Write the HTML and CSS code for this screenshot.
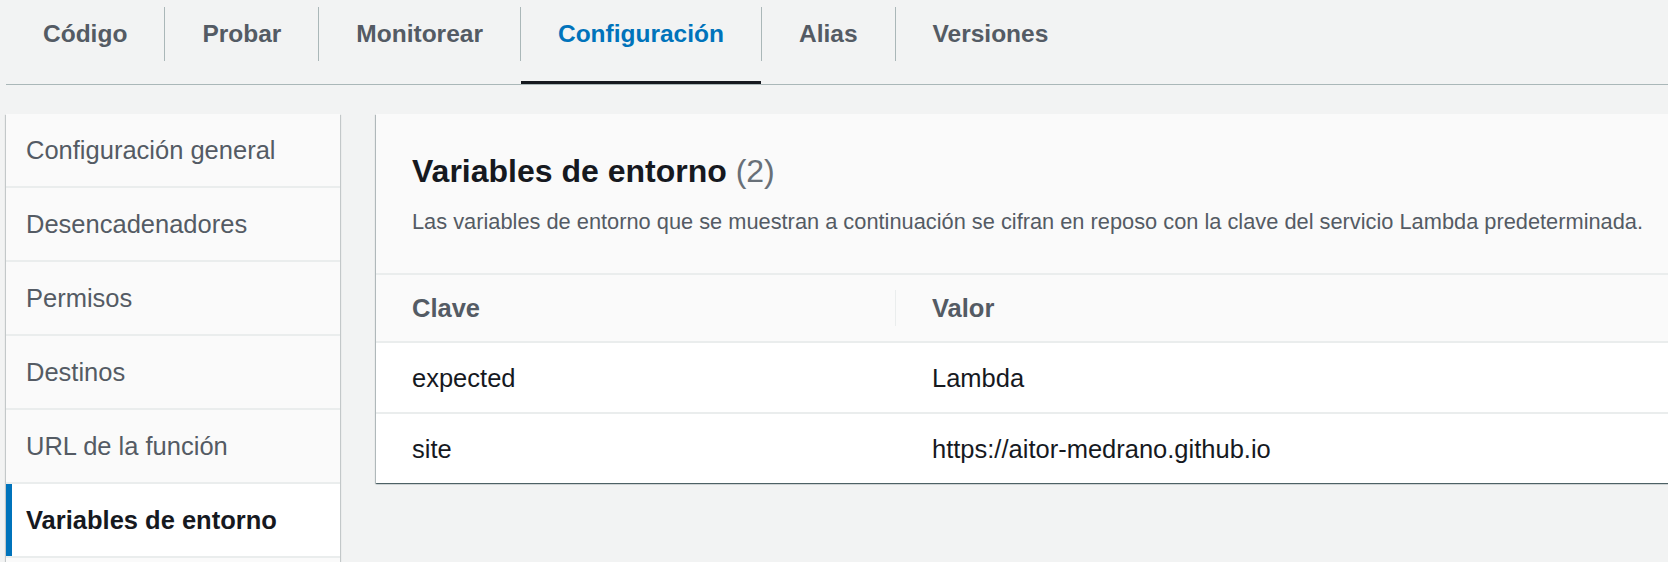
FILE: index.html
```html
<!DOCTYPE html>
<html lang="es">
<head>
<meta charset="utf-8">
<title>Configuración - Variables de entorno</title>
<link rel="stylesheet" href="styles.css">
</head>
<body>
<div class="page">
  <nav class="tabs">
    <div class="tab">Código</div>
    <span class="tab-sep"></span>
    <div class="tab">Probar</div>
    <span class="tab-sep"></span>
    <div class="tab">Monitorear</div>
    <span class="tab-sep"></span>
    <div class="tab tab-active">Configuración</div>
    <span class="tab-sep"></span>
    <div class="tab">Alias</div>
    <span class="tab-sep"></span>
    <div class="tab">Versiones</div>
  </nav>

  <div class="content">
    <aside class="side-nav">
      <div class="side-item">Configuración general</div>
      <div class="side-item">Desencadenadores</div>
      <div class="side-item">Permisos</div>
      <div class="side-item">Destinos</div>
      <div class="side-item">URL de la función</div>
      <div class="side-item side-item-active">Variables de entorno</div>
      <div class="side-item"></div>
    </aside>

    <section class="card">
      <header class="card-header">
        <h2 class="card-title">Variables de entorno <span class="card-count">(2)</span></h2>
        <p class="card-desc">Las variables de entorno que se muestran a continuación se cifran en reposo con la clave del servicio Lambda predeterminada.</p>
      </header>
      <div class="table">
        <div class="row row-head">
          <div class="cell">Clave</div>
          <span class="col-sep"></span>
          <div class="cell cell-value">Valor</div>
        </div>
        <div class="row row-body">
          <div class="cell">expected</div>
          <div class="cell cell-value">Lambda</div>
        </div>
        <div class="row row-body">
          <div class="cell">site</div>
          <div class="cell cell-value">https://aitor-medrano.github.io</div>
        </div>
      </div>
    </section>
  </div>
</div>
</body>
</html>
```

FILE: styles.css
```css
html, body {
  margin: 0;
  padding: 0;
  overflow: hidden;
  background: #f2f3f3;
}

body {
  font-family: "Liberation Sans", Arial, sans-serif;
  color: #16191f;
}

.page {
  padding-left: 6px;
}

/* Tabs */
.tabs {
  display: flex;
  align-items: flex-start;
  height: 84px;
  border-bottom: 1px solid #aab7b8;
}

.tab {
  box-sizing: border-box;
  height: 84px;
  padding: 0 37px 16px;
  display: flex;
  align-items: center;
  font-size: 24.5px;
  font-weight: 700;
  line-height: 30px;
  color: #545b64;
  white-space: nowrap;
}

.tab-active {
  color: #0073bb;
  box-shadow: inset 0 -3px 0 #16191f;
}

.tab-sep {
  flex: 0 0 1px;
  width: 1px;
  height: 54px;
  margin-top: 7px;
  background: #aab7b8;
}

/* Content layout */
.content {
  display: flex;
  align-items: flex-start;
  gap: 36px;
  margin-top: 29px;
}

.side-nav {
  flex: 0 0 334px;
  width: 334px;
  background: #fafafa;
  box-shadow: 0 1px 1px 0 rgba(0, 28, 36, 0.3), 1px 1px 1px 0 rgba(0, 28, 36, 0.15), -1px 1px 1px 0 rgba(0, 28, 36, 0.15);
}

.side-item {
  box-sizing: border-box;
  height: 74px;
  padding: 0 20px;
  display: flex;
  align-items: center;
  border-bottom: 2px solid #eaeded;
  font-size: 25.5px;
  line-height: 32px;
  color: #545b64;
  white-space: nowrap;
}

.side-item-active {
  background: #ffffff;
  color: #16191f;
  font-weight: 700;
  box-shadow: inset 6px 0 0 #0073bb;
}

/* Card */
.card {
  flex: 0 0 1330px;
  width: 1330px;
  background: #ffffff;
  box-shadow: 0 1px 1px 0 rgba(0, 28, 36, 0.5), 1px 1px 1px 0 rgba(0, 28, 36, 0.2), -1px 1px 1px 0 rgba(0, 28, 36, 0.2);
}

.card-header {
  background: #fafafa;
  padding: 37px 36px 36px;
  border-bottom: 2px solid #eaeded;
}

.card-title {
  margin: 0;
  font-size: 32px;
  line-height: 40px;
  font-weight: 700;
  color: #16191f;
}

.card-count {
  font-weight: 400;
  color: #687078;
}

.card-desc {
  margin: 16px 0 0;
  font-size: 21.8px;
  line-height: 30px;
  color: #545b64;
  white-space: nowrap;
}

/* Table */
.row {
  display: grid;
  align-items: center;
  font-size: 25.5px;
  line-height: 32px;
}

.row-head {
  grid-template-columns: 519px 1px 1fr;
  height: 66px;
  background: #fafafa;
  border-bottom: 2px solid #eaeded;
  font-weight: 700;
  color: #545b64;
}

.row-body {
  grid-template-columns: 520px 1fr;
  height: 69px;
  background: #ffffff;
  color: #16191f;
}

.row-body + .row-body {
  border-top: 2px solid #eaeded;
}

.cell {
  padding-left: 36px;
  white-space: nowrap;
}

.cell-value {
  padding-left: 36px;
}

.col-sep {
  width: 1px;
  height: 36px;
  background: #eaeded;
}
```
